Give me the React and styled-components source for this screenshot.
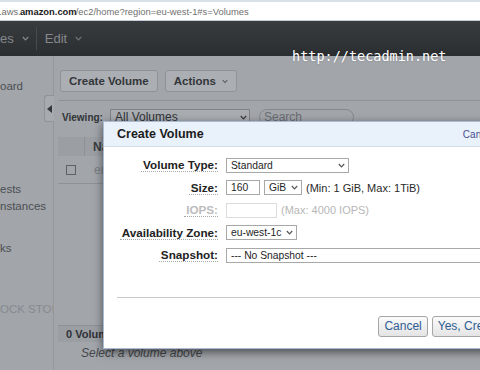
import React from 'react';
import styled, { createGlobalStyle } from 'styled-components';

const GlobalStyle = createGlobalStyle`
  body {
    margin: 0;
    background: #a2a5aa;
  }
`;

const Screen = styled.div`
  position: relative;
  width: 480px;
  height: 370px;
  overflow: hidden;
  font-family: "Liberation Sans", Arial, sans-serif;
  background: #a2a5aa;
`;

const UrlBar = styled.div`
  height: 18px;
  border-top: 2px solid #d8e0ea;
  border-bottom: 1px solid #c4cedb;
  background: #fff;
  display: flex;
  align-items: center;
  font-size: 9.4px;
  color: #707070;
  white-space: nowrap;
  text-indent: -1px;
`;

const Host = styled.b`
  color: #1a1a1a;
`;

const NavBar = styled.div`
  height: 35px;
  background: linear-gradient(#393c3f, #2b2e31);
  display: flex;
  align-items: center;
  color: #85888c;
  font-size: 13px;
`;

const NavItem = styled.div`
  display: flex;
  align-items: center;
  gap: 8px;
  height: 23px;
  padding: ${({ $first }) => ($first ? '0 7px 0 0' : '0 8px')};
  border-right: ${({ $first }) => ($first ? '1px solid #474a4e' : 'none')};
`;

const Body = styled.div`
  position: relative;
  display: flex;
  height: 314px;
`;

const Sidebar = styled.div`
  width: 53px;
  border-right: 1px solid #95989d;
  overflow: hidden;
  display: flex;
  flex-direction: column;
`;

const SideItem = styled.div`
  margin-top: ${({ $top }) => $top}px;
  font-size: 11.5px;
  line-height: 14px;
  white-space: nowrap;
  color: ${({ $section }) => ($section ? '#858a8f' : '#4b4f53')};
`;

const CollapseTab = styled.div`
  position: absolute;
  left: 44px;
  top: 39px;
  width: 9px;
  height: 25px;
  background: #a7aaaf;
  border: 1px solid #909398;
  border-right: none;
  border-radius: 3px 0 0 3px;
  display: flex;
  align-items: center;
  justify-content: center;
`;

const Main = styled.div`
  flex: 1;
  padding-left: 4px;
  display: flex;
  flex-direction: column;
`;

const Toolbar = styled.div`
  display: flex;
  gap: 7px;
  padding: 14px 0 8px 2px;
  border-bottom: 1px solid #8f9297;
`;

const ToolButton = styled.div`
  height: 20px;
  display: flex;
  align-items: center;
  gap: 6px;
  padding: 0 ${({ $pad }) => $pad}px;
  border: 1px solid #8f9297;
  border-radius: 3px;
  background: #abaeb3;
  color: #33363a;
  font-weight: bold;
  font-size: 11.5px;
`;

const ViewRow = styled.div`
  display: flex;
  align-items: center;
  padding: 8px 0 0 4px;
  height: 16px;
`;

const ViewLabel = styled.span`
  width: 48px;
  font-size: 10px;
  font-weight: bold;
  color: #303336;
`;

const DimSelect = styled.div`
  width: 132px;
  height: 14px;
  padding: 0 2px 0 4px;
  border: 1px solid #7f8287;
  background: #a9acb1;
  display: flex;
  align-items: center;
  justify-content: space-between;
  font-size: 12px;
  color: #2f3236;
`;

const SearchBox = styled.div`
  margin-left: 9px;
  width: 85px;
  height: 14px;
  padding: 0 4px;
  border: 1px solid #85888d;
  border-radius: 8px;
  font-size: 12px;
  color: #6a6d72;
  display: flex;
  align-items: center;
`;

const TableHead = styled.div`
  margin-top: 12px;
  height: 19px;
  display: flex;
  background: #9b9ea3;
`;

const CheckCell = styled.div`
  width: 27px;
  border-right: 1px solid #8e9196;
  display: flex;
  align-items: center;
  padding-left: 8px;
  box-sizing: border-box;
`;

const HeadCell = styled.div`
  padding-left: 8px;
  display: flex;
  align-items: center;
  font-weight: bold;
  font-size: 12px;
  color: #3a3d41;
`;

const TableRow = styled.div`
  height: 27px;
  display: flex;
  border-bottom: 1px solid #8e9196;
`;

const RowCheck = styled.div`
  width: 27px;
  padding-left: 8px;
  box-sizing: border-box;
  display: flex;
  align-items: center;
`;

const Box = styled.div`
  width: 8px;
  height: 8px;
  border: 1px solid #5e6165;
`;

const RowCell = styled.div`
  padding-left: 9px;
  display: flex;
  align-items: center;
  font-size: 12px;
  color: #7b7e83;
`;

const FooterBar = styled.div`
  margin-top: 141px;
  height: 16px;
  border-top: 1px solid #8e9196;
  background: #9b9ea3;
  padding-left: 8px;
  display: flex;
  align-items: center;
  font-size: 11px;
  font-weight: bold;
  color: #2f3236;
  white-space: nowrap;
`;

const EmptyNote = styled.div`
  padding: 4px 0 0 23px;
  font-size: 12px;
  font-style: italic;
  color: #45484c;
  white-space: nowrap;
`;

const Modal = styled.div`
  position: absolute;
  left: 103px;
  top: 121px;
  width: 412px;
  height: 226px;
  background: #fff;
  border: 1px solid #a8bbd2;
  box-shadow: 0 3px 9px rgba(0, 0, 0, 0.55);
  display: flex;
  flex-direction: column;
`;

const ModalHeader = styled.div`
  height: 24px;
  background: #e9f1fb;
  border-bottom: 1px solid #d2ddea;
  display: flex;
  align-items: center;
  padding: 0 22px 0 13px;
`;

const ModalTitle = styled.div`
  font-size: 12.5px;
  font-weight: bold;
  color: #1c1c1c;
`;

const HeaderLink = styled.div`
  margin-left: auto;
  font-size: 10px;
  color: #4b4f8e;
`;

const Form = styled.div`
  display: grid;
  grid-template-columns: 114px 1fr;
  column-gap: 8px;
  row-gap: 7.5px;
  align-items: center;
  padding-top: 10.5px;
`;

const Label = styled.span`
  justify-self: end;
  font-size: 11.7px;
  font-weight: bold;
  line-height: 13px;
  color: ${({ $disabled }) => ($disabled ? '#bcbcbc' : '#222')};
  border-bottom: 1px dotted #a9a9a9;
  padding-left: 2px;
`;

const Field = styled.div`
  display: flex;
  align-items: center;
  gap: 4px;
  height: 15px;
  white-space: nowrap;
`;

const Select = styled.div`
  width: ${({ $w }) => $w}px;
  height: 13px;
  box-sizing: content-box;
  padding: 0 3px 0 4px;
  border: 1px solid #a8a8a8;
  display: flex;
  align-items: center;
  justify-content: space-between;
  flex-shrink: 0;
  font-size: 10.3px;
  color: #1e1e1e;
`;

const TextInput = styled.div`
  width: ${({ $w }) => $w}px;
  height: 13px;
  padding-left: 4px;
  border: 1px solid ${({ $disabled }) => ($disabled ? '#dcdcdc' : '#a8a8a8')};
  display: flex;
  align-items: center;
  font-size: 10.3px;
  color: #1e1e1e;
`;

const Hint = styled.span`
  font-size: 11px;
  color: ${({ $disabled }) => ($disabled ? '#b7b7b7' : '#2a2a2a')};
`;

const Divider = styled.div`
  margin: 34px 13px 0;
  border-top: 1px solid #c8c8c8;
`;

const Actions = styled.div`
  display: flex;
  justify-content: flex-end;
  gap: 4px;
  padding: 18px 10px 0 0;
`;

const Button = styled.div`
  height: 19px;
  padding: 0 5px;
  border: 1px solid #a6a6a6;
  border-radius: 3px;
  background: linear-gradient(#fbfbfb, #e4e4e4);
  display: flex;
  align-items: center;
  font-size: 12px;
  color: #2f5c95;
  white-space: nowrap;
`;

const Watermark = styled.div`
  position: absolute;
  left: 292px;
  top: 48px;
  font-family: "DejaVu Sans Mono", monospace;
  font-size: 13.5px;
  color: #fff;
  text-shadow: 0 0 2px rgba(0, 0, 0, 0.25);
`;

const Chevron = ({ color = '#555', w = 7 }) => (
  <svg width={w} height="5" viewBox="0 0 7 5">
    <path d="M0.8 1 L3.5 3.8 L6.2 1" fill="none" stroke={color} strokeWidth="1.2" />
  </svg>
);

const App = () => {
  return (
    <Screen>
      <GlobalStyle />
      <UrlBar>
        .aws.<Host>amazon.com</Host>/ec2/home?region=eu-west-1#s=Volumes
      </UrlBar>
      <NavBar>
        <NavItem $first>
          es <Chevron color="#85888c" />
        </NavItem>
        <NavItem>
          Edit <Chevron color="#6f7276" />
        </NavItem>
      </NavBar>
      <Body>
        <Sidebar>
          <SideItem $top={23}>oard</SideItem>
          <SideItem $top={89}>ests</SideItem>
          <SideItem $top={3}>nstances</SideItem>
          <SideItem $top={28}>ks</SideItem>
          <SideItem $top={47} $section>OCK STOI</SideItem>
        </Sidebar>
        <CollapseTab>
          <svg width="5" height="8" viewBox="0 0 5 8">
            <path d="M5 0 L0 4 L5 8 Z" fill="#34373b" />
          </svg>
        </CollapseTab>
        <Main>
          <Toolbar>
            <ToolButton $pad={8}>Create Volume</ToolButton>
            <ToolButton $pad={8}>
              Actions <Chevron color="#54575b" w={6} />
            </ToolButton>
          </Toolbar>
          <ViewRow>
            <ViewLabel>Viewing:</ViewLabel>
            <DimSelect>
              All Volumes <Chevron color="#34373b" />
            </DimSelect>
            <SearchBox>Search</SearchBox>
          </ViewRow>
          <TableHead>
            <CheckCell />
            <HeadCell>Name</HeadCell>
          </TableHead>
          <TableRow>
            <RowCheck>
              <Box />
            </RowCheck>
            <RowCell>empty</RowCell>
          </TableRow>
          <FooterBar>0 Volumes selected</FooterBar>
          <EmptyNote>Select a volume above</EmptyNote>
        </Main>
      </Body>

      <Modal>
        <ModalHeader>
          <ModalTitle>Create Volume</ModalTitle>
          <HeaderLink>Cancel</HeaderLink>
        </ModalHeader>
        <Form>
          <Label>Volume Type:</Label>
          <Field>
            <Select $w={114}>
              Standard <Chevron />
            </Select>
          </Field>

          <Label>Size:</Label>
          <Field>
            <TextInput $w={28}>160</TextInput>
            <Select $w={29}>
              GiB <Chevron />
            </Select>
            <Hint>(Min: 1 GiB, Max: 1TiB)</Hint>
          </Field>

          <Label $disabled>IOPS:</Label>
          <Field>
            <TextInput $w={45} $disabled />
            <Hint $disabled>(Max: 4000 IOPS)</Hint>
          </Field>

          <Label>Availability Zone:</Label>
          <Field>
            <Select $w={62}>
              eu-west-1c <Chevron />
            </Select>
          </Field>

          <Label>Snapshot:</Label>
          <Field>
            <Select $w={270}>--- No Snapshot ---</Select>
          </Field>
        </Form>
        <Divider />
        <Actions>
          <Button>Cancel</Button>
          <Button>Yes, Create</Button>
        </Actions>
      </Modal>

      <Watermark>http://tecadmin.net</Watermark>
    </Screen>
  );
};

export default App;
